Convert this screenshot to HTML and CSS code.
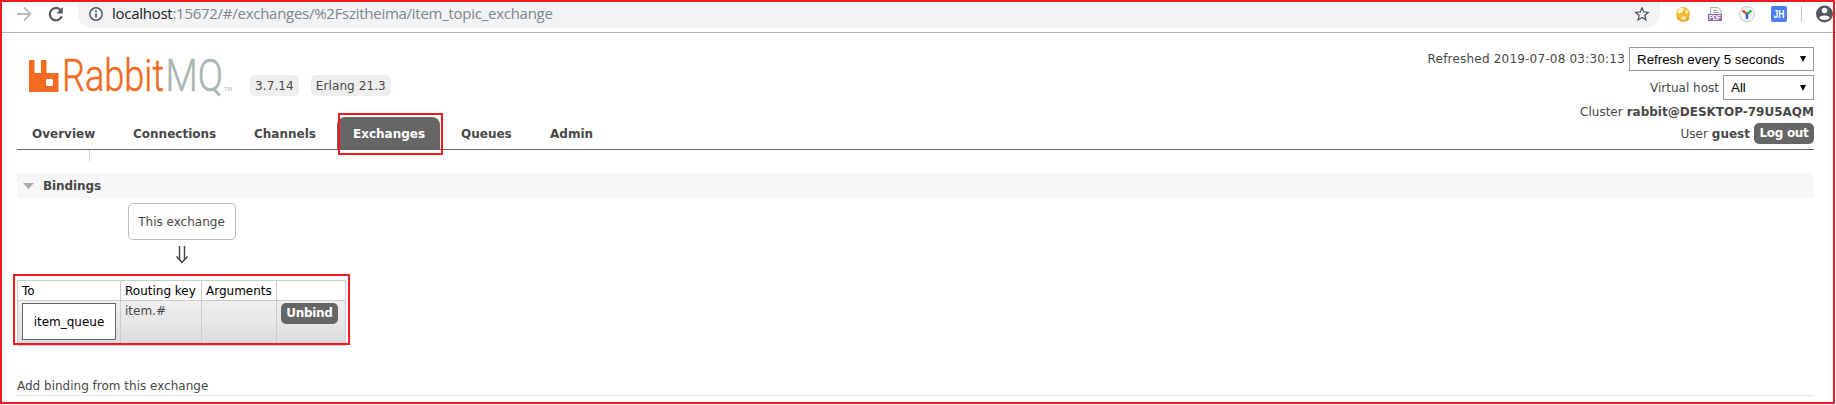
FILE: index.html
```html
<!DOCTYPE html>
<html lang="en">
<head>
<meta charset="utf-8">
<title>RabbitMQ Management</title>
<link rel="stylesheet" href="styles.css">
</head>
<body>
<div class="screen">
  <header class="toolbar">
    <svg class="nav-icons" width="78" height="28" viewBox="0 0 78 28" fill="none">
      <path d="M17 14H30M24 7.5L30.5 14L24 20.500" stroke="#b9babb" stroke-width="1.9"/>
      <path d="M60.800 10.200A6.200 6.200 0 1 0 61.800 16.400" stroke="#54585d" stroke-width="2.200"/>
      <path d="M62.800 7V13.500H56.300Z" fill="#54585d"/>
    </svg>
    <div class="omnibox">
      <svg width="16" height="16" viewBox="0 0 16 16" fill="none" stroke="#54585d"><circle cx="8" cy="8" r="6.200" stroke-width="1.500"/><path d="M8 7.200V11.500M8 4.300V6" stroke-width="1.600"/></svg>
      <span class="url"><span class="host">localhost</span>:15672/#/exchanges/%2Fszitheima/item_topic_exchange</span>
      <svg class="star" width="16" height="16" viewBox="0 0 16 16"><path d="M8 1.800L9.800 6L14.300 6.400L10.900 9.300L11.900 13.800L8 11.400L4.100 13.800L5.100 9.300L1.700 6.400L6.200 6Z" fill="none" stroke="#54585d" stroke-width="1.300"/></svg>
    </div>
    <svg class="extensions" width="176" height="32" viewBox="1660 0 176 32">
      <circle cx="1683" cy="14" r="7" fill="#f8b72f"/>
      <path d="M1680 7.500L1684 8.500L1683 12L1679 14L1677 12Z" fill="#fff3c8"/>
      <path d="M1686 9L1689 12L1687 14L1685 12ZM1681 17L1685 16L1686 19L1683 20.500Z" fill="#fff0b8"/>
      <path d="M1677 17A7 7 0 0 0 1689 18" stroke="#e99a20" stroke-width="1.500" fill="none"/>
      <path d="M1710.500 7.500H1718L1721 10.500V17H1710.500Z" fill="#fafafa" stroke="#aaa"/>
      <path d="M1713 10.500H1717M1713 12.500H1719" stroke="#aaa"/>
      <rect x="1708" y="14" width="14" height="7" fill="#8a63aa"/>
      <text x="1709" y="20" font-size="6.500" textLength="12" class="ext-text">PDF</text>
      <circle cx="1747" cy="14" r="7.500" fill="#f7f7f7" stroke="#c4c4c4"/>
      <path d="M1747 14L1742.500 10.500" stroke="#e94a2b" stroke-width="2.400"/>
      <path d="M1747 14L1751.500 10.500" stroke="#35b558" stroke-width="2.400"/>
      <path d="M1747 13.500V19" stroke="#2d62e8" stroke-width="2.400"/>
      <rect x="1771" y="6" width="16" height="16" rx="2" fill="#4c7eee"/>
      <text x="1773.500" y="17.500" font-size="10" textLength="11" lengthAdjust="spacingAndGlyphs" class="ext-text">JH</text>
      <path d="M1801.500 6V22" stroke="#c5c6c8"/>
      <circle cx="1824.500" cy="14" r="8.500" fill="#54585d"/>
      <circle cx="1824.500" cy="10.500" r="2.800" fill="#fff"/>
      <path d="M1819.300 18C1820 14.800 1829 14.800 1829.700 18C1828 20.500 1821 20.500 1819.300 18Z" fill="#fff"/>
    </svg>
  </header>

  <div class="page">
    <div class="masthead">
      <svg class="logo" width="206" height="40" viewBox="28 56 206 40">
        <path fill="#f36a21" fill-rule="evenodd" d="M29.500 60H34Q34.500 60 34.500 60.500V72.500Q34.500 73 35 73H40.500Q41 73 41 72.500V60.500Q41 60 41.500 60H46Q46.500 60 46.500 60.500V72.500Q46.500 73 47 73H58Q58.500 73 58.500 73.500V91.500Q58.500 92 58 92H29.500Q29 92 29 91.500V60.500Q29 60 29.500 60ZM47.500 79Q46 79 46 80.500V84.500Q46 86 47.500 86H51.500Q53 86 53 84.500V80.500Q53 79 51.500 79Z"/>
        <text x="62" y="91" textLength="102" lengthAdjust="spacingAndGlyphs" class="word rabbit">Rabbit</text>
        <text x="165.500" y="91" textLength="57.500" lengthAdjust="spacingAndGlyphs" class="word mq">MQ</text>
        <text x="224" y="91" textLength="8" lengthAdjust="spacingAndGlyphs" class="tm">TM</text>
      </svg>
      <div class="versions"><span>3.7.14</span><span>Erlang 21.3</span></div>
      <div class="status">
        <div class="line refresh"><span class="stamp">Refreshed 2019-07-08 03:30:13</span><span class="select wide">Refresh every 5 seconds<i></i></span></div>
        <div class="line vhost"><span>Virtual host</span><span class="select">All<i></i></span></div>
        <div class="line cluster"><span>Cluster</span><b>rabbit@DESKTOP-79U5AQM</b></div>
        <div class="line user"><span>User</span><b>guest</b><span class="button logout">Log out</span></div>
      </div>
    </div>
    <nav class="tabs">
      <span class="tab overview">Overview</span><span class="tab connections">Connections</span><span class="tab channels">Channels</span><span class="tab current">Exchanges</span><span class="tab queues">Queues</span><span class="tab admin">Admin</span>
    </nav>
    <div class="stub"></div>
    <h2><svg width="11" height="6"><path d="M0 0H11L5.500 6Z" fill="#aaa"/></svg><span>Bindings</span></h2>
    <div class="bindings">
      <div class="exchange">This exchange</div>
      <svg class="arrow" width="12" height="18" viewBox="0 0 12 18" fill="none" stroke="#484848"><path d="M3.500 0V14M8.500 0V14" stroke-width="1.500"/><path d="M.5 10.500L6 16.500L11.500 10.500" stroke-width="1.500"/></svg>
      <div class="grid">
        <div class="th">To</div><div class="th">Routing key</div><div class="th">Arguments</div><div class="th"></div>
        <div class="td"><span class="queue">item_queue</span></div><div class="td">item.#</div><div class="td"></div><div class="td"><span class="button unbind">Unbind</span></div>
      </div>
    </div>
    <h3><span>Add binding from this exchange</span></h3>
  </div>
  <div class="mark mark-tab"></div>
  <div class="mark mark-table"></div>
  <div class="mark mark-page"></div>
</div>
</body>
</html>
```
FILE: styles.css
```css
* { box-sizing: border-box; }
body { margin: 0; background: #fff; }
.screen { position: relative; width: 1836px; height: 405px; overflow: hidden; font: 12px/16px "DejaVu Sans", Verdana, sans-serif; color: #484848; }
svg { display: block; flex: none; }
.toolbar { display: flex; height: 33px; border-bottom: 1px solid #b0b0b0; }
.omnibox { display: flex; align-items: center; width: 1583px; height: 28px; padding: 0 10px; background: #f1f3f4; border-radius: 0 0 14px 14px; }
.url { margin: -2px 0 0 8px; font: 15px/20px "Open Sans", "Noto Sans", sans-serif; letter-spacing: -.27px; color: #80868b; white-space: nowrap; }
.host { color: #202124; }
.star { margin-left: auto; }
.ext-text { font-family: "Liberation Sans", sans-serif; font-weight: bold; fill: #fff; }
.page { padding: 0 22px 0 17px; }
.masthead { display: flex; align-items: flex-start; height: 84px; white-space: nowrap; }
.logo { margin: 23px 0 0 11px; overflow: visible; }
.word { font: 300 45px Roboto, sans-serif; }
.rabbit { fill: #f36a21; stroke: #f36a21; stroke-width: .5px; }
.mq { fill: #a9b5b0; stroke: #a9b5b0; stroke-width: .5px; }
.tm { font: 6px "Liberation Sans", sans-serif; fill: #a9b5b0; }
.versions { display: flex; gap: 12px; margin: 42px 0 0 16px; }
.versions span { height: 21px; padding: 3px 5px; background: #eee; border-radius: 5px; letter-spacing: .1px; }
.status { display: flex; flex-direction: column; margin: 14px 0 0 auto; }
.line { display: flex; flex: none; align-items: center; justify-content: flex-end; gap: 4px; }
.stamp { letter-spacing: .2px; }
.refresh { height: 24px; }
.vhost { height: 25px; margin-top: 4px; }
.cluster { height: 16px; margin-top: 4px; }
.user { height: 21px; margin-top: 3px; }
.select { display: flex; align-items: center; justify-content: space-between; width: 91px; height: 100%; padding: 0 7px; border: 1px solid #999; color: #000; font: 13.333px "Liberation Sans", Arial, sans-serif; }
.wide { width: 185px; }
.select i { border: 3px solid transparent; border-top: 6px solid #000; border-bottom: 0; }
.button { display: block; height: 21px; border-radius: 5px; background: #666; color: #fff; font-weight: bold; letter-spacing: -.3px; line-height: 21px; text-align: center; }
.logout { width: 60px; }
.unbind { width: 57px; }
.tabs { display: flex; height: 33px; border-bottom: 1px solid #666; }
.tab { width: 99px; height: 32px; padding-left: 16px; border-radius: 8px 8px 0 0; font-weight: bold; line-height: 34px; }
.overview { width: 100px; padding-left: 15px; }
.connections { width: 121px; }
.current { width: 103px; margin-right: 5px; background: #666; color: #fff; }
.queues { width: 89px; }
.stub { width: 1px; height: 11px; margin-left: 72px; background: #ccc; }
h2 { display: flex; align-items: center; gap: 9px; height: 25px; margin: 12px 0 0; padding-left: 6px; background: #f7f7f7; font-size: 12px; line-height: 25px; }
h2 span { padding-top: 1px; letter-spacing: -.1px; }
.bindings { display: flex; flex-direction: column; align-items: center; width: 329px; margin-top: 5px; }
.exchange { width: 108px; height: 37px; border: 1px solid #bbb; border-radius: 5px; text-align: center; line-height: 36px; }
.arrow { margin-top: 6px; }
.grid { display: grid; grid-template-columns: 103px 81px 75px 69px; grid-template-rows: 20px 45px; width: 329px; height: 66px; margin-top: 16px; border: 1px solid #ccc; border-width: 1px 0 0 1px; white-space: nowrap; }
.th, .td { padding: 2px 4px; border: 1px solid #ccc; border-width: 0 1px 1px 0; }
.th { color: #000; }
.td { background: linear-gradient(#f0f0f0, #dcdcdc); }
.queue { display: block; width: 94px; height: 37px; border: 1px solid #666; background: #fff; color: #000; text-align: center; line-height: 36px; }
h3 { height: 18px; margin: 32px 0 0; border-bottom: 1px solid #e4e4e4; font-size: 12px; font-weight: normal; line-height: 16px; }
.mark { position: absolute; border: 2px solid #ed1c24; }
.mark-tab { left: 338px; top: 113px; width: 105px; height: 42px; }
.mark-table { left: 13px; top: 274px; width: 337px; height: 71px; }
.mark-page { left: 0; top: 0; width: 1835px; height: 404px; }
```
